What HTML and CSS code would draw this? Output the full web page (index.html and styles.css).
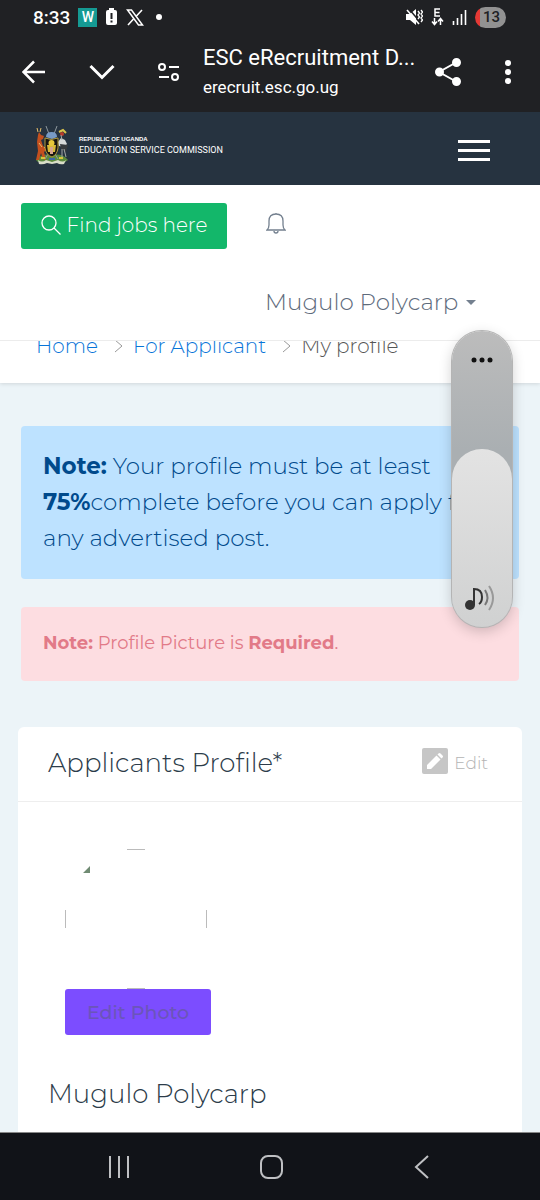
FILE: index.html
```html
<!DOCTYPE html>
<html lang="en">
<head>
  <meta charset="UTF-8">
  <meta name="viewport" content="width=device-width, initial-scale=1.0">
  <title>ESC eRecruitment</title>
  <link rel="stylesheet" href="styles.css">
</head>
<body>
  <!-- Status bar and browser toolbar -->
  <div class="browser">
    <div class="status-bar">
      <div class="status-left">
        <span class="clock">8:33</span>
        <span class="app-badge">W</span>
        <svg width="13" height="18" viewBox="0 0 13 18"><path fill="#fff" d="M3 2h1V0h5v2h1q2 0 2 2v11q0 2-2 2H3q-2 0-2-2V4q0-2 2-2z"/><path stroke="#202124" stroke-width="2" d="M6.500 5v6M6.500 12.500v2"/></svg>
        <svg width="18" height="17" viewBox="0 0 18 17" fill="none" stroke="#fff"><path stroke-width="1.500" d="M1.500 1h4l11 15h-4z"/><path stroke-width="1.600" d="M16 1 10 7.500M7.500 10 2 16"/></svg>
        <span class="dot"></span>
      </div>
      <div class="status-right">
        <svg width="17" height="18" viewBox="0 0 17 18" fill="none" stroke="#fff"><path fill="#fff" stroke="none" d="M0 6h4l6-5v16l-6-5H0z"/><path stroke="#202124" stroke-width="1.500" d="M3 1l12 14"/><path stroke-width="1.600" d="M1 2l12 14"/><path stroke-width="1.300" d="M12 3l1.500 2L12 7l1.500 2L12 11M15 2l1.500 2L15 6l1.500 2L15 10l1.500 2L15 14"/></svg>
        <svg width="13" height="18" viewBox="0 0 13 18" fill="none" stroke="#fff" stroke-width="1.500"><path d="M9 1H4v7h5M4 4.500h4.500M3.500 10v6M1 13.500l2.500 3 2.500-3M9.500 17v-6M7 13.500l2.500-3 2.500 3"/></svg>
        <svg width="15" height="16" viewBox="0 0 15 16" stroke="#fff" stroke-width="1.600"><path d="M1.500 12v4M5.500 9v7M9.500 5v11M13.500 1v15"/></svg>
        <span class="battery">13</span>
      </div>
    </div>
    <div class="toolbar">
      <button class="tool" aria-label="Back"><svg width="24" height="24" viewBox="0 0 24 24" fill="none" stroke="#fff" stroke-width="2.500"><path d="M23 12H2M12 1.500 1.500 12 12 22.500"/></svg></button>
      <button class="tool" aria-label="Collapse"><svg width="26" height="16" viewBox="0 0 26 16" fill="none" stroke="#fff" stroke-width="3"><path d="M1.500 2 13 13.500 24.500 2"/></svg></button>
      <button class="tool" aria-label="Site settings"><svg width="22" height="18" viewBox="0 0 22 18" fill="none" stroke="#fff" stroke-width="2"><circle cx="4" cy="4" r="3"/><path d="M11 4h10M1 14h10"/><circle cx="17" cy="14" r="3"/></svg></button>
      <div class="page-info">
        <span class="page-title">ESC eRecruitment D...</span>
        <span class="page-url">erecruit.esc.go.ug</span>
      </div>
      <button class="tool" aria-label="Share"><svg width="26" height="28" viewBox="0 0 26 28" fill="#fff" stroke="#fff" stroke-width="2"><path fill="none" d="M21 4.500 4 14l17 9.500"/><circle cx="21.500" cy="4.500" r="3.500"/><circle cx="4.500" cy="14" r="3.500"/><circle cx="21.500" cy="23.500" r="3.500"/></svg></button>
      <button class="tool more" aria-label="More"><svg width="6" height="24" viewBox="0 0 6 24" fill="#fff"><circle cx="3" cy="3" r="3"/><circle cx="3" cy="12" r="3"/><circle cx="3" cy="21" r="3"/></svg></button>
    </div>
  </div>

  <header class="site-header">
    <a class="brand" href="#">
      <svg width="36" height="40" viewBox="0 0 36 40">
        <path fill="#5c8a3c" d="M2 35q6-7 16-5 10-2 16 5l-3 2H4z"/>
        <path fill="#d9ddc8" d="M4 35q4 3 8 0l6 2 6-2q5 3 8 0l-2 4q-4 1-7-1l-5 1-5-1q-4 2-8 1z"/>
        <path fill="#c4501e" d="M5 7l2 3 3 1-1 3-2 1 2 6 4 3-3 3 2 8-3-1-2-6-2 7H2l2-9-1-9 1-7z"/>
        <path stroke="#e9c06a" fill="none" d="M4 7 3 3M6 7l1-4M5 18l3 4M10 23l3-3"/>
        <path fill="#d7d9d8" d="M27 13l4 2 2 4-3 3-5-1-1-4z"/>
        <path fill="#373a3c" d="M26 19l8 1-2 7-5-3z"/>
        <path stroke="#d9c34b" stroke-width="2" fill="none" d="M25 7l4-2 3 3"/>
        <circle cx="28" cy="9" r="2" fill="#b93b2b"/>
        <path stroke="#a5a9a6" fill="none" d="M27 10l1 5M28 24v10M30 24l2 8"/>
        <path stroke="#8f999e" d="M12 1l3 8M23 1l-3 8M14 29l-3 5M21 29l3 5"/>
        <path fill="#789bc5" d="M12 12q0-5 5.500-5t5.500 5l-5 2z"/>
        <path fill="#171511" stroke="#b39b3d" d="M11 13q6 3 13 0v10q-1 7-6 9-6-2-7-9z"/>
        <path fill="#d8b939" d="M13 20h9l-1 7h-7z"/>
        <circle cx="17.500" cy="18" r="3" fill="#e6c73b"/>
        <path fill="#d6a58c" d="M16 22h3v7h-3z"/>
        <path stroke="#3b65a5" stroke-width="2" d="M15 34h6"/>
        <path stroke="#d8c43d" stroke-width="2" d="M7 33h4M25 33h4"/>
      </svg>
      <span class="brand-text"><b>REPUBLIC OF UGANDA</b><span>EDUCATION SERVICE COMMISSION</span></span>
    </a>
    <button class="menu" aria-label="Menu"><span></span><span></span><span></span></button>
  </header>

  <div class="subheader">
    <a class="btn-jobs" href="#">
      <svg width="20" height="20" viewBox="0 0 20 20" fill="none" stroke="#fff" stroke-width="1.300"><circle cx="8" cy="8" r="7"/><path d="M13 13l6.500 6.500"/></svg>
      Find jobs here
    </a>
    <button class="bell" aria-label="Notifications"><svg width="20" height="22" viewBox="0 0 20 22" fill="none" stroke="#74808f" stroke-width="1.300"><path d="M10 1v1M1 18h18q-2-2-2-5V9q0-7-7-7T3 9v4q0 3-2 5zM8 19q0 2 2 2t2-2"/></svg></button>
    <button class="user">Mugulo Polycarp <span class="caret"></span></button>
  </div>

  <nav class="breadcrumb">
    <a href="#">Home</a>
    <svg width="9" height="14" viewBox="0 0 9 14" fill="none" stroke="#999"><path d="M1 1l7 6-7 6"/></svg>
    <a href="#">For Applicant</a>
    <svg width="9" height="14" viewBox="0 0 9 14" fill="none" stroke="#999"><path d="M1 1l7 6-7 6"/></svg>
    <span>My profile</span>
  </nav>

  <main class="content">
    <div class="alert alert-info">
      <b>Note:</b> Your profile must be at least <b>75%</b>complete before you can apply for any advertised post.
    </div>
    <div class="alert alert-danger">
      <b>Note:</b> Profile Picture is <b>Required</b>.
    </div>

    <section class="card">
      <div class="card-header">
        <h2>Applicants Profile*</h2>
        <a class="edit" href="#">
          <svg width="26" height="26" viewBox="0 0 26 26"><rect width="26" height="26" rx="2" fill="#c6c6c6"/><path fill="#fff" d="M5 21v-4L14.500 7.500l4 4L9 21zM15.500 6.500l1-1q1-1 2 0l2 2q1 1 0 2l-1 1z"/></svg>
          Edit
        </a>
      </div>
      <div class="card-body">
        <div class="photo">
          <svg width="142" height="140" viewBox="0 0 142 140" fill="none" stroke="#bbb"><path d="M62 .500h18M62 139.500h18M.500 61v18M141.500 61v18"/><path fill="#708b73" stroke="none" d="M17 24h1l7-7v7z"/></svg>
          <button class="btn-photo">Edit Photo</button>
        </div>
        <h2>Mugulo Polycarp</h2>
      </div>
    </section>
  </main>

  <!-- Volume panel over the page -->
  <div class="volume">
    <svg class="volume-dots" width="22" height="6" viewBox="0 0 22 6" fill="#111"><circle cx="3" cy="3" r="2.500"/><circle cx="11" cy="3" r="2.500"/><circle cx="19" cy="3" r="2.500"/></svg>
    <div class="volume-level">
      <svg width="34" height="28" viewBox="0 0 34 28" fill="none" stroke="#333" stroke-width="2"><circle cx="7" cy="21" r="5" fill="#333" stroke="none"/><path d="M11 21V5q8 0 8 8 0 5-3 7"/><path stroke="#777" d="M22 6q5 8 0 15"/><path stroke="#999" d="M26 2q8 12 0 24"/></svg>
    </div>
  </div>

  <nav class="system-nav">
    <button aria-label="Recents"><svg width="22" height="24" viewBox="0 0 22 24" stroke="#bfc0c3" stroke-width="2"><path d="M2 1v22M11 1v22M20 1v22"/></svg></button>
    <button aria-label="Home"><svg width="24" height="24" viewBox="0 0 24 24" fill="none" stroke="#bfc0c3" stroke-width="2"><rect x="1" y="1" width="21" height="22" rx="7"/></svg></button>
    <button aria-label="Back"><svg width="15" height="24" viewBox="0 0 15 24" fill="none" stroke="#bfc0c3" stroke-width="2"><path d="M14 1 2 12l12 11"/></svg></button>
  </nav>
</body>
</html>
```
FILE: styles.css
```css
* {
  margin: 0;
  padding: 0;
  box-sizing: border-box;
}

body {
  display: flex;
  flex-direction: column;
  min-height: 100vh;
  position: relative;
  font-family: 'Montserrat', 'Inter', sans-serif;
  font-weight: 300;
  background: #ecf4f8;
  color: #2c3c4a;
}

svg {
  display: block;
  flex-shrink: 0;
}

button {
  font: inherit;
  color: inherit;
  background: none;
  border: none;
  cursor: pointer;
}

a {
  color: #0874d8;
  text-decoration: none;
}

.browser {
  background: #202124;
  color: #fff;
  font-family: 'Roboto', sans-serif;
  font-weight: 400;
}

.status-bar {
  display: flex;
  justify-content: space-between;
  align-items: center;
  height: 34px;
  padding: 0 34px 0 33px;
}

.status-left,
.status-right {
  display: flex;
  align-items: center;
  gap: 8px;
}

.clock {
  font-size: 19px;
  font-weight: 500;
}

.app-badge {
  width: 19px;
  height: 19px;
  background: #159a93;
  font-size: 14px;
  font-weight: 500;
  line-height: 19px;
  text-align: center;
}

.dot {
  width: 6px;
  height: 6px;
  margin-left: 4px;
  border-radius: 50%;
  background: #fff;
}

.battery {
  width: 31px;
  height: 21px;
  border-radius: 11px;
  background: linear-gradient(to right, #e53935 5px, #929292 5px);
  color: #202124;
  font-size: 15px;
  font-weight: 500;
  line-height: 21px;
  text-align: center;
  padding-left: 2px;
}

.toolbar {
  display: flex;
  align-items: center;
  height: 78px;
  padding: 0 29px 2px 22px;
}

.tool {
  flex-shrink: 0;
}

.tool + .tool {
  margin-left: 43px;
}

.toolbar .more {
  margin-left: 44px;
}

.page-info {
  flex: 1;
  min-width: 0;
  margin-left: 23px;
  white-space: nowrap;
}

.page-title,
.page-url {
  display: block;
}

.page-title {
  font-size: 22px;
  line-height: 30px;
}

.page-url {
  font-size: 17px;
  line-height: 28px;
}

.site-header {
  display: flex;
  justify-content: space-between;
  align-items: center;
  height: 73px;
  padding: 0 50px 0 34px;
  background: #263340;
}

.brand {
  display: flex;
  align-items: center;
  gap: 9px;
  color: #fff;
  font-family: 'Roboto', sans-serif;
  font-weight: 400;
  padding-bottom: 8px;
}

.brand-text {
  display: flex;
  flex-direction: column;
  font-size: 9px;
  line-height: 11px;
}

.brand-text b {
  font-family: 'Liberation Sans', Arial, sans-serif;
  font-size: 6px;
}

.menu {
  display: flex;
  flex-direction: column;
  gap: 6px;
  width: 32px;
  padding-top: 4px;
}

.menu span {
  height: 3px;
  background: #fff;
}

.subheader {
  display: grid;
  grid-template-columns: 206px 1fr;
  column-gap: 38px;
  row-gap: 38px;
  align-items: start;
  align-content: start;
  height: 156px;
  padding: 18px 21px 0;
  background: #fff;
  border-bottom: 1px solid #ececec;
  position: relative;
}

.btn-jobs {
  display: flex;
  align-items: center;
  justify-content: center;
  gap: 6px;
  height: 46px;
  padding-bottom: 2px;
  border-radius: 3px;
  background: #13b76a;
  color: #fff;
  font-size: 20px;
}

.bell {
  justify-self: start;
  padding: 9px 1px;
}

.user {
  grid-column: 2;
  justify-self: start;
  display: flex;
  align-items: center;
  gap: 8px;
  font-size: 23px;
  line-height: 30px;
  color: #5e6b7c;
}

.caret {
  border: 5px solid transparent;
  border-top-color: #74808f;
  border-bottom: none;
}

/* slides under the subheader */
.breadcrumb {
  display: flex;
  align-items: center;
  gap: 10px;
  height: 72px;
  margin-top: -30px;
  padding: 0 36px 2px;
  background: #fff;
  font-size: 20px;
  color: #555;
  box-shadow: 0 1px 4px rgba(0, 0, 0, 0.12);
}

.breadcrumb svg {
  margin-left: 6px;
}

.content {
  flex: 1;
  padding: 43px 18px 0;
  display: flex;
  flex-direction: column;
}

.alert {
  margin: 0 3px 28px;
  padding: 21px 22px;
  border-radius: 4px;
}

.alert b {
  font-weight: 700;
}

.alert-info {
  background: #bde2ff;
  color: #004a8c;
  font-size: 23px;
  line-height: 36px;
  padding: 22px 22px 23px;
}

.alert-danger {
  background: #fddde1;
  color: #e27a88;
  font-size: 18px;
  font-weight: 400;
  line-height: 30px;
  padding-bottom: 23px;
  margin-bottom: 46px;
}

.card {
  flex: 1;
  background: #fff;
  border-radius: 6px 6px 0 0;
}

.card h2 {
  font-size: 26px;
  font-weight: 300;
  line-height: 32px;
}

.card-header {
  display: flex;
  justify-content: space-between;
  align-items: center;
  height: 75px;
  padding: 0 34px 2px 30px;
  border-bottom: 1px solid #eee;
}

.edit {
  display: flex;
  align-items: center;
  gap: 6px;
  color: #b4b4b4;
  font-size: 17px;
}

.edit svg {
  margin-bottom: 4px;
}

.card-body {
  padding: 47px 30px 20px;
}

.photo {
  padding-left: 17px;
  margin-bottom: 43px;
}

.btn-photo {
  width: 146px;
  height: 46px;
  border-radius: 3px;
  background: #7c4dff;
  color: #6b55b9;
  font-size: 19px;
  font-weight: 500;
}

.volume {
  position: absolute;
  top: 331px;
  right: 28px;
  width: 60px;
  height: 296px;
  display: flex;
  flex-direction: column;
  justify-content: space-between;
  align-items: center;
  padding-top: 26px;
  border-radius: 30px;
  background: linear-gradient(#bcbcbc, #aaafb2 40%);
  box-shadow: 0 0 0 1px #b4b4b4, 0 4px 14px rgba(0, 0, 0, 0.2);
}

.volume-level {
  display: flex;
  justify-content: center;
  align-items: flex-end;
  width: 100%;
  height: 178px;
  padding: 0 4px 15px 0;
  border-radius: 30px;
  background: linear-gradient(#e3e3e3, #d0d1d1);
}

.system-nav {
  display: flex;
  justify-content: space-between;
  align-items: center;
  height: 68px;
  padding: 0 111px 0 108px;
  background: #111318;
  border-top: 1px solid #888;
}
```
